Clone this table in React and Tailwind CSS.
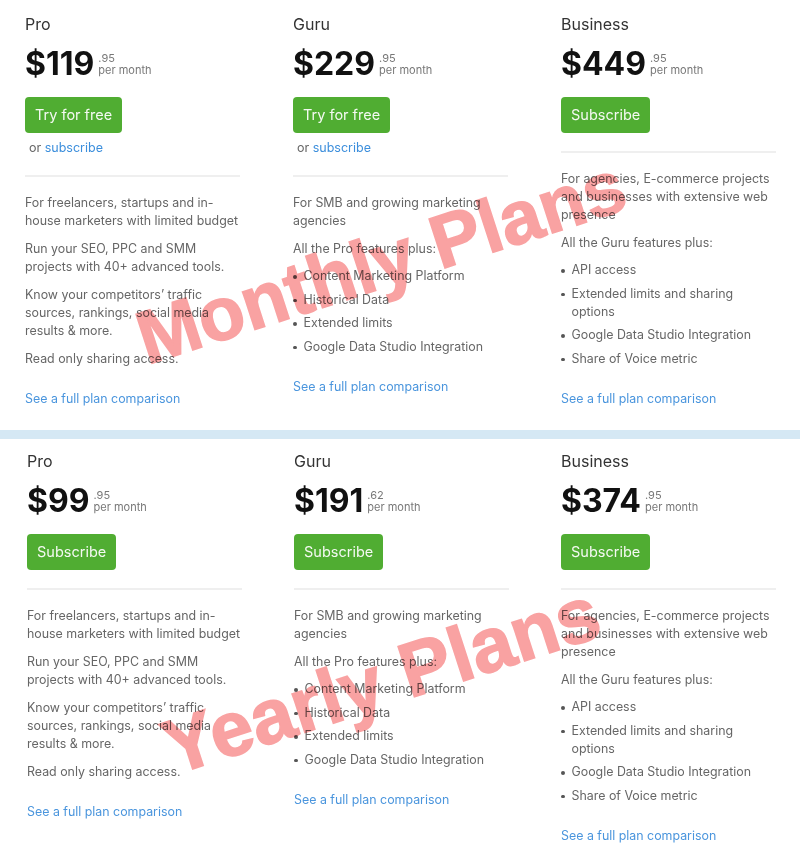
const monthly = [
  {
    name: 'Pro', price: '119', cents: '.95', cta: 'Try for free', trial: true,
    paras: [
      ['For freelancers, startups and in-', 'house marketers with limited budget'],
      ['Run your SEO, PPC and SMM', 'projects with 40+ advanced tools.'],
      ['Know your competitors\u2019 traffic', 'sources, rankings, social media', 'results & more.'],
      ['Read only sharing access.'],
    ],
  },
  {
    name: 'Guru', price: '229', cents: '.95', cta: 'Try for free', trial: true,
    paras: [['For SMB and growing marketing', 'agencies'], ['All the Pro features plus:']],
    bullets: [['Content Marketing Platform'], ['Historical Data'], ['Extended limits'], ['Google Data Studio Integration']],
  },
  {
    name: 'Business', price: '449', cents: '.95', cta: 'Subscribe',
    paras: [['For agencies, E-commerce projects', 'and businesses with extensive web', 'presence'], ['All the Guru features plus:']],
    bullets: [['API access'], ['Extended limits and sharing', 'options'], ['Google Data Studio Integration'], ['Share of Voice metric']],
  },
]

const yearly = [
  { ...monthly[0], price: '99', cents: '.95', cta: 'Subscribe', trial: false },
  { ...monthly[1], price: '191', cents: '.62', cta: 'Subscribe', trial: false },
  { ...monthly[2], price: '374', cents: '.95' },
]

function Lines({ lines }) {
  return lines.map((l, i) => (
    <span key={i}>
      {i > 0 && <br />}
      {l}
    </span>
  ))
}

function PlanColumn({ plan }) {
  return (
    <div className="flex flex-col">
      <h3 className="text-[16px] leading-6 text-[#333]">{plan.name}</h3>
      <div className="mt-2 flex">
        <span className="text-[32px] leading-[40px] font-bold text-[#111]">${plan.price}</span>
        <div className="ml-1 pt-2 flex flex-col text-[11px] text-[#777]">
          <span className="leading-3">{plan.cents}</span>
          <span className="leading-[13px]">per month</span>
        </div>
      </div>
      <button className="mt-[13px] self-start h-9 px-2.5 rounded bg-[#50ad32] text-[#f4f9f2] text-[14.5px]">
        {plan.cta}
      </button>
      {plan.trial && (
        <p className="mt-1.5 pl-1 text-[12.5px] leading-[18px] text-[#666]">
          or <a className="text-[#3d8fdc]">subscribe</a>
        </p>
      )}
      <div className="mt-[18px] h-[2px] bg-[#efefef]" />
      <div className="mt-[17px] flex flex-col gap-2.5 text-[12.4px] leading-[18px] text-[#666] whitespace-nowrap">
        {plan.paras.map((p, i) => (
          <p key={i}><Lines lines={p} /></p>
        ))}
        {plan.bullets && (
          <ul className="-mt-px flex flex-col gap-[5.5px]">
            {plan.bullets.map((b, i) => (
              <li key={i} className="flex items-start">
                <span className="mt-[8px] w-[3.5px] h-[3.5px] rounded-full bg-[#555] shrink-0" />
                <span className="ml-[7px]"><Lines lines={b} /></span>
              </li>
            ))}
          </ul>
        )}
      </div>
      <a className="mt-[22px] text-[12.4px] leading-[18px] text-[#4a95dd]">See a full plan comparison</a>
    </div>
  )
}

export default function App() {
  return (
    <div className="w-[800px] h-[850px] overflow-hidden bg-white font-['Inter',sans-serif]">
      <section className="relative h-[430px] pt-3 pl-[25px] pr-[24px] grid grid-cols-3 gap-x-[53px] items-start">
        {monthly.map((p) => <PlanColumn key={p.name} plan={p} />)}
        <span className="absolute left-[381px] top-[262px] -translate-x-1/2 -translate-y-1/2 -rotate-[18deg] whitespace-nowrap leading-none text-[75px] font-bold text-[#f9a2a2] mix-blend-multiply [-webkit-text-stroke:1.5px_#f9a2a2] font-['Liberation_Sans',Arial,sans-serif] pointer-events-none">
          Monthly Plans
        </span>
      </section>
      <div className="h-[9px] bg-[#d5e8f4]" />
      <section className="relative h-[411px] pt-[10px] pl-[27px] pr-[24px] grid grid-cols-3 gap-x-[52px] items-start">
        {yearly.map((p) => <PlanColumn key={p.name} plan={p} />)}
        <span className="absolute left-[381px] top-[241px] -translate-x-1/2 -translate-y-1/2 -rotate-[18deg] whitespace-nowrap leading-none text-[77px] font-bold text-[#f9a2a2] mix-blend-multiply [-webkit-text-stroke:1.5px_#f9a2a2] font-['Liberation_Sans',Arial,sans-serif] pointer-events-none">
          Yearly Plans
        </span>
      </section>
    </div>
  )
}
